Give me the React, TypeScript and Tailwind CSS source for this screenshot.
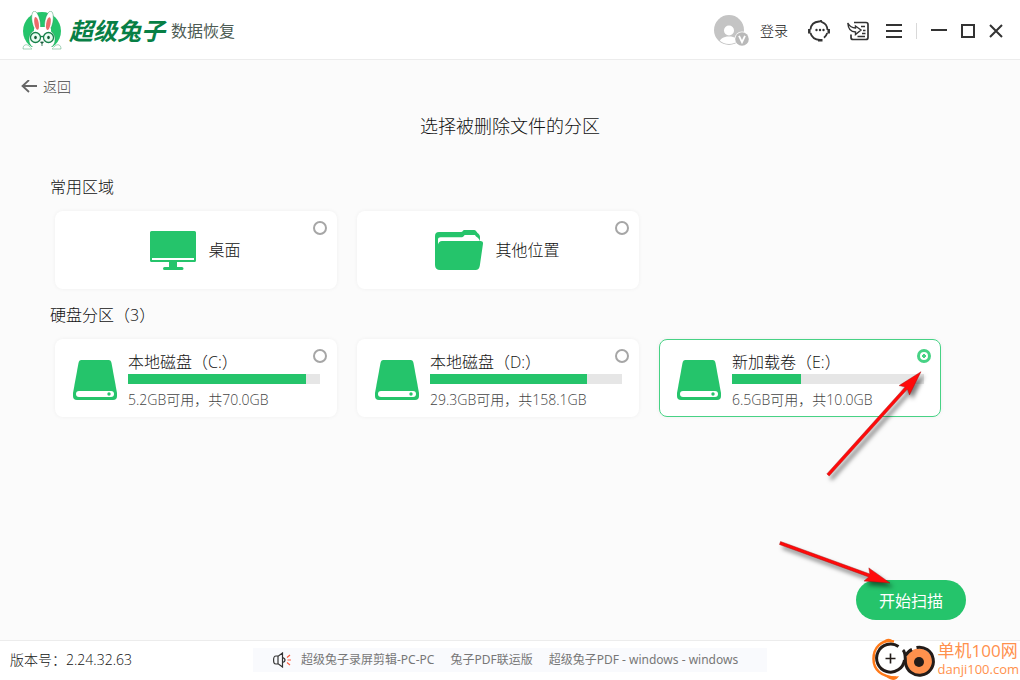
import { useState } from 'react'

type Place = { id: string; name: string; kind: 'desktop' | 'folder' }
type Disk = { id: string; name: string; info: string; used: number }

const places: Place[] = [
  { id: 'desktop', name: '桌面', kind: 'desktop' },
  { id: 'other', name: '其他位置', kind: 'folder' },
]

const disks: Disk[] = [
  { id: 'c', name: '本地磁盘（C:）', info: '5.2GB可用，共70.0GB', used: 92.6 },
  { id: 'd', name: '本地磁盘（D:）', info: '29.3GB可用，共158.1GB', used: 81.7 },
  { id: 'e', name: '新加载卷（E:）', info: '6.5GB可用，共10.0GB', used: 36 },
]

const news = ['超级兔子录屏剪辑-PC-PC', '兔子PDF联运版', '超级兔子PDF - windows - windows']

function RabbitLogo() {
  return (
    <svg width="40" height="40" viewBox="0 0 40 40" aria-hidden="true">
      <circle cx="20" cy="20" r="19" fill="#25c46b" />
      <g fill="#fff" stroke="#1b8f50" strokeWidth="0.4">
        <ellipse cx="14" cy="10.500" rx="4" ry="10.500" transform="rotate(-11 14 10)" />
        <ellipse cx="27" cy="10.500" rx="4" ry="10.500" transform="rotate(11 27 10)" />
        <path d="M20 17.500c8.500 0 13 5 13 11s-4 10-13 10-13-4-13-10 4.500-11 13-11z" />
        <path d="M1 38c0-5 4-5 6-3l3 3zM39 38c0-5-4-5-6-3l-3 3z" />
      </g>
      <path d="M8 36h24c-2 2.500-5 3.500-12 3.500S10 38.500 8 36z" fill="#fff" />
      <path d="M12 17.500c4-2 13-2 17 0v4H12z" fill="#fff" />
      <ellipse cx="14.500" cy="12.500" rx="2.200" ry="6.500" fill="#ee6a6a" transform="rotate(-10 14 12)" />
      <ellipse cx="26.500" cy="12.500" rx="2.200" ry="6.500" fill="#ee6a6a" transform="rotate(10 26 12)" />
      <g fill="#e8fbf1" stroke="#17804a" strokeWidth="1.300">
        <circle cx="13.500" cy="26.500" r="5" />
        <circle cx="26.500" cy="26.500" r="5" />
        <path d="M18.500 25.500h3" />
      </g>
      <ellipse cx="13.500" cy="26.500" rx="1.300" ry="1.800" fill="#145c37" />
      <ellipse cx="26.500" cy="26.500" rx="1.300" ry="1.800" fill="#145c37" />
      <path d="M18.500 31h3L20 32.500zM20 32v3" fill="#145c37" stroke="#145c37" strokeWidth="0.800" />
    </svg>
  )
}

function Avatar() {
  return (
    <svg width="36" height="32" viewBox="0 0 36 32" aria-hidden="true">
      <defs>
        <clipPath id="face"><circle cx="15" cy="15" r="14" /></clipPath>
      </defs>
      <circle cx="15" cy="15" r="15" fill="#c4c4c4" />
      <g clipPath="url(#face)" fill="#fff">
        <circle cx="15" cy="15.500" r="5" />
        <path d="M5 30c0-6 4-8.500 10-8.500S25 24 25 30z" />
      </g>
      <circle cx="28" cy="24" r="7.500" fill="#fff" />
      <circle cx="28" cy="24" r="6.800" fill="#b9b9b9" />
      <path d="M25 20.800l3 6.400 3-6.400" fill="none" stroke="#fff" strokeWidth="1.800" />
    </svg>
  )
}

function ServiceIcon() {
  return (
    <svg width="22" height="22" viewBox="0 0 22 22" fill="none" stroke="#333" strokeWidth="1.800" aria-hidden="true">
      <path d="M2.500 9.500C3 4.500 6.500 1.800 11 1.500c1.500-.1 1.500-.3 2-.8.200 1 .6 1.400 1.500 1.700 3 1 4.700 4 5 7.600M2.500 13c1 4 4 6.500 9.500 7M19.200 13c-.6 2-1.700 3.500-3.200 4.700" />
      <path d="M1.300 9v4.500M20.700 9v4.500M10 20.200h4.500" strokeWidth="2.500" />
      <g fill="#333" stroke="none">
        <circle cx="8.500" cy="10" r="1.200" />
        <circle cx="12" cy="10" r="1.200" />
        <circle cx="15.500" cy="10" r="1.200" />
      </g>
    </svg>
  )
}

function ImportIcon() {
  return (
    <svg width="22" height="20" viewBox="0 0 22 20" fill="none" stroke="#333" strokeWidth="1.700" aria-hidden="true">
      <path d="M7 1.500h12a2 2 0 0 1 2 2v13a2 2 0 0 1-2 2H6a2 2 0 0 1-2-2v-3" />
      <path d="M.8 2c.4 6 3.200 9 7.700 9v2.500L14 9 8.500 5v2C5 7 2.500 5 .8 2z" strokeWidth="1.400" />
      <path d="M14 5.500h4M16 9.500h2.500M15 12.500h3.500M10.500 15.500h7.500" strokeWidth="1.400" />
    </svg>
  )
}

function DesktopIcon() {
  return (
    <svg width="46" height="39" viewBox="0 0 46 39" fill="#25c46b" aria-hidden="true">
      <path d="M1.500 0h43A1.500 1.500 0 0 1 46 1.500v28a1.500 1.500 0 0 1-1.500 1.500h-43A1.500 1.500 0 0 1 0 29.500v-28A1.500 1.500 0 0 1 1.500 0zM2 27v2h42v-2z" fillRule="evenodd" />
      <path d="M19 30h8v6h5a1.500 1.500 0 0 1 0 3H14.500a1.500 1.500 0 0 1 0-3H19z" />
    </svg>
  )
}

function FolderIcon() {
  return (
    <svg width="48" height="40" viewBox="0 0 48 40" fill="#25c46b" aria-hidden="true">
      <path d="M0 6a4 4 0 0 1 4-4h22c2 0 1.500-2 3.500-2H39c2 0 2.500 2 3.500 3 1.500.8 2.500 2.500 2.500 4v6H0z" />
      <path d="M3 14.500V9.500C3 8 4 7.200 5.500 7.200H27c2 0 1.500-2.200 3.500-2.200H40c1 2.500 4 2 5 6.500L6 13z" fill="#fff" />
      <path d="M0 12h3v2.500c.6-2 1.800-3.500 4-3.500h38.500c1.700 0 2.700 1 2.500 2.700l-3.200 22c-.4 2.800-1.800 4.300-4.300 4.300H5c-3 0-5-1.800-5-5z" />
    </svg>
  )
}

function DiskIcon() {
  return (
    <svg width="44" height="40" viewBox="0 0 44 40" className="shrink-0" aria-hidden="true">
      <path d="M8.500 0h27C37.500 0 38 1 38.500 3L44 33v3a4 4 0 0 1-4 4H4a4 4 0 0 1-4-4v-3L5.500 3C6 1 6.500 0 8.500 0z" fill="#25c46b" />
      <rect x="3" y="31" width="38" height="6" rx="3" fill="#fff" />
      <circle cx="36" cy="34" r="1.700" fill="#25c46b" />
    </svg>
  )
}

function SpeakerIcon() {
  return (
    <svg width="18" height="16" viewBox="0 0 18 16" fill="none" stroke="#333" strokeWidth="1.200" aria-hidden="true">
      <path d="M3 4h2.500L9.500 1v14l-4-3H3C1 12 .6 10.500.6 8S1 4 3 4zM5 4.500v7M9.500 5.500c2 .5 2.500 1.200 2.500 2.500s-.5 2-2.500 2.500" />
      <path d="M14 5.500L17 3M14.500 8H18M14 10.500l3 2.500" stroke="#ff5a3c" />
    </svg>
  )
}

function GogglesMark() {
  return (
    <svg width="64" height="42" viewBox="0 0 64 42" fill="none" aria-hidden="true">
      <path d="M22 3.500C9 1 1.500 10 1.500 21c0 10 7 18 23 18.500" stroke="#ff7a1a" strokeWidth="2.500" />
      <path d="M11 4C14-.5 19-.5 22 4c-4-1.500-7-1.500-11 0zM13 37.500c5 5.500 11 6 14 .5-5 1.500-9 1.500-14-.5z" fill="#ff7a1a" />
      <path d="M26.500 8.500A14 14 0 1 0 32.500 22" stroke="#231c19" strokeWidth="3" />
      <path d="M18.500 15.500v10M13.500 20.500h10" stroke="#231c19" strokeWidth="1.600" />
      <circle cx="47" cy="24" r="13.500" fill="#ff914d" />
      <path d="M31 12c3 3 2 9 2.500 13a14 14 0 1 0 11-15.500M33 18c2-3 3.500-5 7-6.500" stroke="#231c19" strokeWidth="3" />
      <circle cx="47" cy="24" r="5" fill="#231c19" />
    </svg>
  )
}

// red pointer with a barbed head, drawn tip-right along the x axis
function Pointer({ length }: { length: number }) {
  return (
    <path
      d={`M0-1.600L${length - 22}-1.600L${length - 25}-7L${length} 0L${length - 25} 7L${length - 22} 1.600L0 1.600z`}
      fill="#ff0a0a"
      stroke="#a01010"
      strokeWidth="0.400"
    />
  )
}

const radio =
  'absolute top-2.5 right-2.5 m-0 size-3.5 cursor-pointer appearance-none rounded-full border-2 border-[#a6a6a6] bg-white checked:border-[3px] checked:border-[#47d285] checked:bg-[radial-gradient(circle,#47d285_0_2px,#fff_2px)]'

const card =
  'relative flex h-[78px] cursor-pointer rounded-lg bg-white shadow-[0_0_4px_rgba(0,0,0,0.05)] has-checked:outline has-checked:outline-[#47d285] has-checked:-outline-offset-1'

export default function App() {
  const [target, setTarget] = useState('e')

  return (
    <div className="relative flex min-h-screen flex-col bg-[#fbfbfb] font-['Open_Sans','Noto_Sans_CJK_SC',sans-serif] font-light text-[#111]">
      <header className="flex h-[60px] items-center justify-between border-b border-[#ececec] bg-white pt-0.5 pr-[17px] pl-[22px]">
        <div className="flex items-center">
          <RabbitLogo />
          <span className="ml-[7px] text-2xl font-bold text-[#087f45] italic">超级兔子</span>
          <h1 className="ml-1.5 text-base font-normal text-[#4d5c54]">数据恢复</h1>
        </div>
        <div className="flex items-center">
          <button type="button" className="flex items-center gap-2.5 text-sm">
            <Avatar />
            登录
          </button>
          <button type="button" aria-label="客服" className="ml-5"><ServiceIcon /></button>
          <button type="button" aria-label="导入" className="ml-[17px]"><ImportIcon /></button>
          <button type="button" aria-label="菜单" className="ml-[17px]">
            <svg width="16" height="14" viewBox="0 0 16 14" stroke="#333" strokeWidth="1.800" aria-hidden="true">
              <path d="M0 1h16M0 7h16M0 13h16" />
            </svg>
          </button>
          <span className="mx-3.5 h-4 w-px bg-[#d9d9d9]" />
          <button type="button" aria-label="最小化">
            <svg width="16" height="14" viewBox="0 0 16 14" stroke="#333" strokeWidth="2" aria-hidden="true"><path d="M0 6h16" /></svg>
          </button>
          <button type="button" aria-label="最大化" className="ml-3.5">
            <svg width="14" height="14" viewBox="0 0 14 14" fill="none" stroke="#333" strokeWidth="2" aria-hidden="true"><path d="M1 1h12v12H1z" /></svg>
          </button>
          <button type="button" aria-label="关闭" className="ml-3.5">
            <svg width="14" height="14" viewBox="0 0 14 14" fill="none" stroke="#333" strokeWidth="2" aria-hidden="true"><path d="M1 1l12 12M13 1L1 13" /></svg>
          </button>
        </div>
      </header>

      <main className="flex flex-1 flex-col pt-[17px]">
        <button type="button" className="ml-[21px] flex h-5 items-center gap-1.5 self-start text-sm text-[#444]">
          <svg width="16" height="14" viewBox="0 0 16 14" fill="none" stroke="#666" strokeWidth="1.800" aria-hidden="true">
            <path d="M16 6H1.500M8 0L1.500 6 8 12" />
          </svg>
          返回
        </button>
        <h2 className="mt-[15px] text-center text-lg leading-7">选择被删除文件的分区</h2>

        <section className="mt-[35px] pr-[79px] pl-[55px]">
          <h3 className="-ml-[5px] leading-6">常用区域</h3>
          <div className="mt-3 grid grid-cols-3 gap-5">
            {places.map(p => (
              <label key={p.id} className={`${card} items-center justify-center gap-3 pr-px`}>
                {p.kind === 'desktop' ? <DesktopIcon /> : <FolderIcon />}
                <span>{p.name}</span>
                <input type="radio" name="target" checked={target === p.id} onChange={() => setTarget(p.id)} className={radio} />
              </label>
            ))}
          </div>
        </section>

        <section className="mt-3.5 pr-[79px] pl-[55px]">
          <h3 className="-ml-[5px] leading-6">硬盘分区（3）</h3>
          <div className="mt-3 grid grid-cols-3 gap-5">
            {disks.map(d => (
              <label key={d.id} className={`${card} items-center gap-[11px] pt-1 pr-[17px] pl-[18px]`}>
                <DiskIcon />
                <span className="flex flex-1 flex-col">
                  <span className="leading-6">{d.name}</span>
                  <span className="h-2.5 bg-[#e6e6e6]">
                    <span className="block h-full bg-[#25c46b]" style={{ width: `${d.used}%` }} />
                  </span>
                  <span className="mt-1.5 text-sm text-[#444]">{d.info}</span>
                </span>
                <input type="radio" name="target" checked={target === d.id} onChange={() => setTarget(d.id)} className={radio} />
              </label>
            ))}
          </div>
        </section>

        <button type="button" className="mt-auto mr-[54px] mb-5 h-10 w-[110px] self-end rounded-full bg-[#25c46b] pt-0.5 font-normal text-white">
          开始扫描
        </button>
      </main>

      <footer className="grid h-10 grid-cols-[1fr_auto_1fr] items-center border-t border-[#ececec] bg-white pb-0.5">
        <span className="pl-2.5 text-sm">版本号：2.24.32.63</span>
        <div className="flex h-6 min-w-[514px] items-center bg-[#f9fafd] px-5 font-['Noto_Sans','Noto_Sans_CJK_SC',sans-serif] text-xs font-normal text-[#777]">
          <SpeakerIcon />
          <ul className="ml-2.5 flex gap-4">
            {news.map(n => (
              <li key={n}>{n}</li>
            ))}
          </ul>
        </div>
      </footer>

      <div className="absolute right-px bottom-0 flex items-center gap-px font-normal text-[#ff914d]">
        <GogglesMark />
        <div className="flex flex-col">
          <span className="text-[17px] leading-5">单机100网</span>
          <span className="text-[13px] leading-4">danji100.com</span>
        </div>
      </div>

      <svg className="pointer-events-none absolute top-[360px] left-[770px] drop-shadow-[3px_4px_2px_rgba(0,0,0,0.5)]" width="170" height="240" viewBox="0 0 170 240" aria-hidden="true">
        <g transform="translate(58 115) rotate(-48)"><Pointer length={139} /></g>
        <g transform="translate(10 183) rotate(20)"><Pointer length={117} /></g>
      </svg>
    </div>
  )
}
